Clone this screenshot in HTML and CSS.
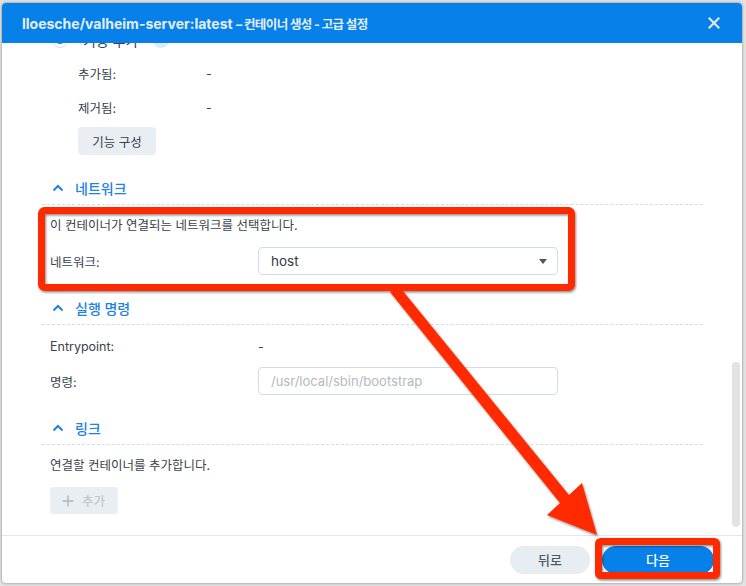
FILE: index.html
```html
<!DOCTYPE html>
<html lang="ko">
<head>
<meta charset="utf-8">
<title>컨테이너 생성</title>
<link rel="stylesheet" href="styles.css">
</head>
<body>
<div class="window">
  <div class="header">
    <div class="title">lloesche/valheim-server:latest <span class="title-ko">– 컨테이너 생성 - 고급 설정</span></div>
    <svg class="close" width="12" height="12" viewBox="0 0 12 12"><path d="M1.5 1.5 L10.5 10.5 M10.5 1.5 L1.5 10.5" stroke="#dce9fb" stroke-width="2.2" stroke-linecap="square"/></svg>
  </div>
  <div class="content">
    <div class="step-row">
      <span class="radio"><span class="dot"></span></span>
      <span class="step-text">기능 추가</span>
      <span class="help"></span>
    </div>
    <div class="feature">
      <div class="kv"><span>추가됨:</span><span>-</span></div>
      <div class="kv"><span>제거됨:</span><span>-</span></div>
      <button class="btn-gray">기능 구성</button>
    </div>

    <div class="section">
      <div class="section-head">
        <svg width="12" height="8" viewBox="0 0 12 8"><path d="M1.5 6.5 L6 2 L10.5 6.5" fill="none" stroke="#1d82e4" stroke-width="2"/></svg>
        <span>네트워크</span>
      </div>
      <div class="section-body">
        <div class="line">이 컨테이너가 연결되는 네트워크를 선택합니다.</div>
        <div class="row">
          <span>네트워크:</span>
          <div class="select"><span>host</span><span class="caret"></span></div>
        </div>
      </div>
    </div>

    <div class="section">
      <div class="section-head">
        <svg width="12" height="8" viewBox="0 0 12 8"><path d="M1.5 6.5 L6 2 L10.5 6.5" fill="none" stroke="#1d82e4" stroke-width="2"/></svg>
        <span>실행 명령</span>
      </div>
      <div class="section-body">
        <div class="row"><span>Entrypoint:</span><span>-</span></div>
        <div class="row">
          <span>명령:</span>
          <div class="input">/usr/local/sbin/bootstrap</div>
        </div>
      </div>
    </div>

    <div class="section">
      <div class="section-head">
        <svg width="12" height="8" viewBox="0 0 12 8"><path d="M1.5 6.5 L6 2 L10.5 6.5" fill="none" stroke="#1d82e4" stroke-width="2"/></svg>
        <span>링크</span>
      </div>
      <div class="section-body">
        <div class="line">연결할 컨테이너를 추가합니다.</div>
        <div class="btn-row">
          <button class="btn-add"><svg width="12" height="12" viewBox="0 0 12 12"><path d="M6 0.5 V11.5 M0.5 6 H11.5" stroke="#b9c1c9" stroke-width="1.8"/></svg><span>추가</span></button>
        </div>
      </div>
    </div>

    <div class="scrollbar"></div>
  </div>
  <div class="footer">
    <button class="btn-back">뒤로</button>
    <button class="btn-next">다음</button>
  </div>
</div>

<svg class="annotations" width="746" height="586" viewBox="0 0 746 586">
  <defs>
    <filter id="sh" x="-10%" y="-10%" width="120%" height="120%">
      <feDropShadow dx="1" dy="1.5" stdDeviation="1.2" flood-color="#000" flood-opacity="0.45"/>
    </filter>
  </defs>
  <g filter="url(#sh)">
    <polygon points="398,285 569,495 582,483 597,535 547,515 560,503 390,292" fill="#ff2a00"/>
    <rect x="41.5" y="210.5" width="530" height="77" rx="3" fill="none" stroke="#ff2a00" stroke-width="7"/>
    <rect x="598.5" y="541.5" width="118" height="34" rx="2" fill="none" stroke="#ff2a00" stroke-width="7"/>
  </g>
</svg>
</body>
</html>
```
FILE: styles.css
```css
html, body {
  margin: 0;
  padding: 0;
}
body {
  width: 746px;
  height: 586px;
  background: #e3e3e3;
  position: relative;
  overflow: hidden;
  font-family: "Inter", "Noto Sans CJK KR", sans-serif;
  font-size: 12.5px;
  color: #38424c;
}
.window {
  margin: 3px 0 0 2px;
  width: 740px;
  height: 580px;
  background: #fff;
  border-radius: 4px;
  display: flex;
  flex-direction: column;
  overflow: hidden;
  box-shadow: 0 0 3px rgba(0, 0, 0, 0.45);
}
.header {
  height: 40px;
  flex: none;
  background: #0780ea;
  display: flex;
  align-items: center;
  justify-content: space-between;
  padding: 0 22px 0 20px;
  position: relative;
  z-index: 2;
}
.title {
  color: #e4eefb;
  font-weight: 700;
  font-size: 14px;
}
.title-ko {
  font-size: 12.5px;
  letter-spacing: -0.6px;
}
.content {
  flex: 1;
  position: relative;
  overflow: hidden;
  padding: 0 39px 0 40px;
}
.step-row {
  margin-top: -19px;
  height: 32px;
  display: flex;
  align-items: center;
  padding-left: 10px;
}
.radio {
  width: 16px;
  height: 16px;
  box-sizing: border-box;
  border: 1px solid #d4dce4;
  border-radius: 50%;
  display: flex;
  align-items: center;
  justify-content: center;
}
.dot {
  width: 8px;
  height: 8px;
  border-radius: 50%;
  background: #1d82e4;
}
.step-text {
  margin-left: 15px;
  font-size: 14px;
}
.help {
  margin-left: 15px;
  width: 16px;
  height: 16px;
  border-radius: 50%;
  background: #dcebfb;
}
.feature {
  padding-left: 36px;
}
.kv {
  display: grid;
  grid-template-columns: 128px 1fr;
  height: 34px;
  align-items: center;
}
.btn-gray {
  margin-top: 3px;
  width: 78px;
  height: 28px;
  border: none;
  border-radius: 4px;
  background: #e9eef3;
  font-family: inherit;
  font-size: 12.5px;
  color: #38424c;
  padding: 0;
}
.section {
  margin-top: 17px;
}
.section-head {
  height: 32px;
  border-bottom: 1px dashed #d3dde7;
  display: flex;
  align-items: center;
  gap: 11px;
  padding-left: 10px;
  color: #1d82e4;
  font-size: 14px;
  font-weight: 500;
}
.section-body {
  padding: 7px 0 0 8px;
  display: flex;
  flex-direction: column;
  gap: 7px;
}
.line {
  height: 28px;
  line-height: 28px;
}
.row {
  height: 28px;
  display: grid;
  grid-template-columns: 208px 300px;
  align-items: center;
}
.select, .input {
  height: 28px;
  box-sizing: border-box;
  border: 1px solid #d3dce5;
  border-radius: 4px;
  padding: 0 10px 0 12px;
  display: flex;
  align-items: center;
}
.select {
  justify-content: space-between;
  font-size: 13.5px;
  color: #333a42;
}
.caret {
  width: 0;
  height: 0;
  border-left: 4.5px solid transparent;
  border-right: 4.5px solid transparent;
  border-top: 5px solid #4b5563;
}
.input {
  color: #b3bac1;
  font-size: 13px;
}
.btn-row {
  display: flex;
}
.btn-add {
  width: 68px;
  height: 27px;
  border: none;
  border-radius: 4px;
  background: #e9eef3;
  display: flex;
  align-items: center;
  gap: 8px;
  padding: 0 0 0 12px;
  font-family: inherit;
  font-size: 12.5px;
  color: #b9c1c9;
}
.scrollbar {
  position: absolute;
  right: 2px;
  top: 319px;
  width: 8px;
  height: 165px;
  border-radius: 4px;
  background: #e3e3e3;
}
.footer {
  flex: none;
  height: 48px;
  box-sizing: border-box;
  border-top: 1px solid #e3e7eb;
  display: flex;
  justify-content: flex-end;
  align-items: center;
  gap: 12px;
  padding-right: 28px;
}
.btn-back, .btn-next {
  height: 28px;
  border: none;
  border-radius: 14px;
  font-family: inherit;
  font-size: 13px;
  font-weight: 500;
  padding: 0;
}
.btn-back {
  width: 80px;
  background: #e8edf2;
  color: #4f5a65;
}
.btn-next {
  width: 112px;
  background: #0780ea;
  color: #fff;
}
.annotations {
  position: absolute;
  left: 0;
  top: 0;
  pointer-events: none;
}
```
